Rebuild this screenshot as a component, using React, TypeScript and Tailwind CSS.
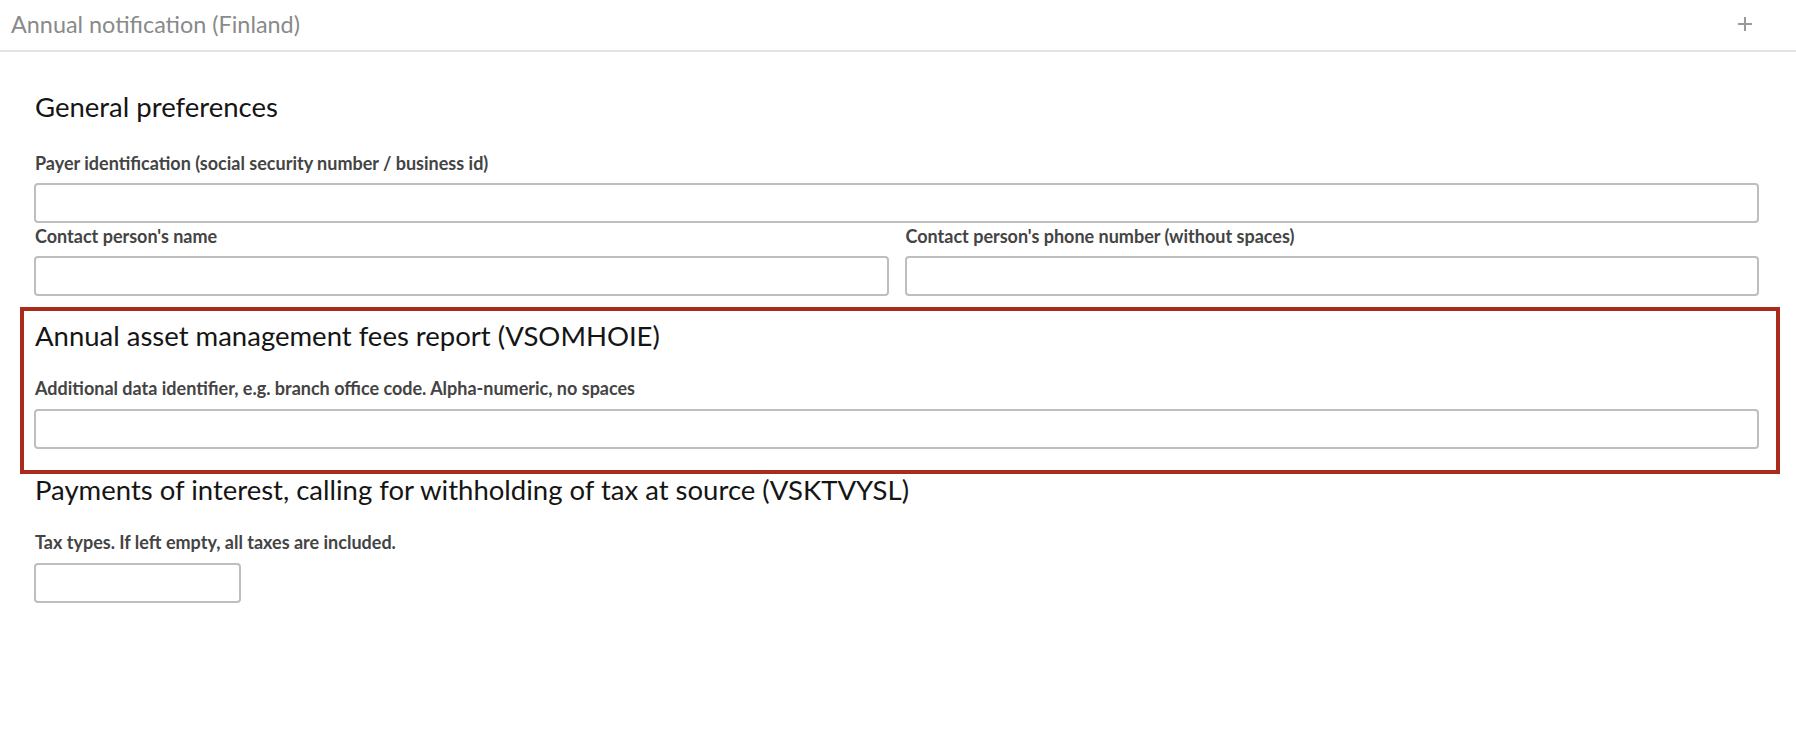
import React from "react";

const font = { fontFamily: "Lato, 'Noto Sans', sans-serif" };

function Label({ children, className = "" }: { children: React.ReactNode; className?: string }) {
  return (
    <div className={`h-[20px] leading-[20px] text-[18px] font-bold text-[#444444] pl-[1px] ${className}`}>{children}</div>
  );
}

function Input({ className = "" }: { className?: string }) {
  return (
    <input
      type="text"
      className={`block h-[40px] rounded-[4px] border-2 border-[#bebebe] bg-white outline-none ${className}`}
    />
  );
}

function Heading({ children, className = "" }: { children: React.ReactNode; className?: string }) {
  return <h3 className={`h-[30px] leading-[30px] text-[27.5px] font-normal text-[#151515] pl-[1px] ${className}`}>{children}</h3>;
}

export default function App() {
  return (
    <div className="w-[1796px] h-[738px] bg-white overflow-hidden" style={font}>
      <div className="flex h-[52px] items-center justify-between border-b-2 border-[#e4e4e4] pl-[11px] pr-[43px]">
        <span className="text-[23.4px] text-[#8a8a8a] leading-[26px] -mt-[2px]">Annual notification (Finland)</span>
        <svg width="16" height="16" viewBox="0 0 16 16" className="-mt-[2px]">
          <path d="M8 1v14M1 8h14" stroke="#9a9a9a" strokeWidth="2" fill="none" />
        </svg>
      </div>

      <div className="pl-[20px] pr-[16px] pt-[40px]">
        <div className="pl-[14px] pr-[21px]">
          <Heading>General preferences</Heading>
          <Label className="mt-[31px]">Payer identification (social security number / business id)</Label>
          <Input className="mt-[10px] w-full" />
          <div className="grid grid-cols-2 gap-x-[16px] mt-[3px]">
            <div>
              <Label>Contact person's name</Label>
              <Input className="mt-[10px] w-full" />
            </div>
            <div>
              <Label>Contact person's phone number (without spaces)</Label>
              <Input className="mt-[10px] w-full" />
            </div>
          </div>
        </div>

        <div className="mt-[11px] border-4 border-[#a82b1b] pl-[10px] pr-[17px] pt-[10px] pb-[21px]">
          <Heading>Annual asset management fees report (VSOMHOIE)</Heading>
          <Label className="mt-[27px]">Additional data identifier, e.g. branch office code. Alpha-numeric, no spaces</Label>
          <Input className="mt-[11px] w-full" />
        </div>

        <div className="pl-[14px] pr-[21px] mt-[1px]">
          <Heading>Payments of interest, calling for withholding of tax at source (VSKTVYSL)</Heading>
          <Label className="mt-[27px]">Tax types. If left empty, all taxes are included.</Label>
          <Input className="mt-[11px] w-[207px]" />
        </div>
      </div>
    </div>
  );
}
